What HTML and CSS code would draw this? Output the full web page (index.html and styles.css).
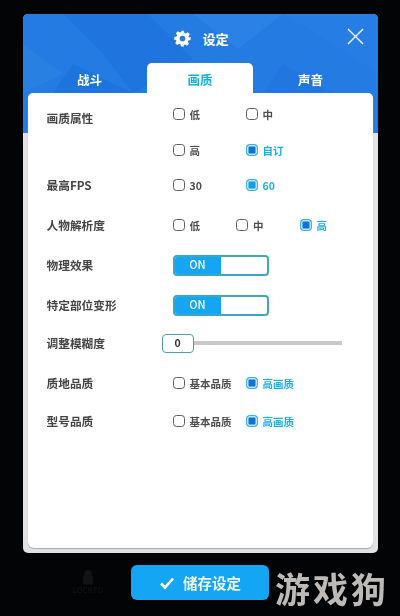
FILE: index.html
```html
<!DOCTYPE html>
<html lang="zh">
<head>
<meta charset="utf-8">
<title>设定</title>
<link rel="stylesheet" href="styles.css">
</head>
<body>
<main class="page">
  <section class="modal">
    <header class="head">
      <svg class="pattern" viewBox="0 0 355 119" preserveAspectRatio="none" aria-hidden="true">
        <polygon points="40,0 125,0 170,45 110,79 80,40" fill="#1668d6" opacity=".35"/>
        <polygon points="50,50 110,79 30,79" fill="#1568d4" opacity=".35"/>
        <polygon points="170,0 260,0 215,35" fill="#3a8fea" opacity=".3"/>
        <polygon points="260,0 355,0 355,60 310,30" fill="#2b80e4" opacity=".3"/>
        <polygon points="0,30 40,60 0,79" fill="#3189e6" opacity=".35"/>
        <polygon points="260,50 310,79 240,79" fill="#1c6fdb" opacity=".35"/>
      </svg>
      <div class="title">
        <svg class="gear" viewBox="0 0 24 24" aria-hidden="true"><path fill-rule="evenodd" d="M10 1h4l.7 3.2 1.9.8 2.8-1.8 2.8 2.8-1.8 2.8.8 1.9L23.4 10v4l-3.2.7-.8 1.9 1.8 2.8-2.8 2.8-2.8-1.8-1.9.8L13.9 23.4h-4l-.7-3.2-1.9-.8-2.8 1.8-2.8-2.8 1.8-2.8-.8-1.9L.5 14v-4l3.2-.7.8-1.9L2.7 4.6 5.5 1.8l2.8 1.8 1.9-.8L10 1Zm2 7a4 4 0 1 0 0 8 4 4 0 0 0 0-8Z"/></svg>
        <h1>设定</h1>
      </div>
      <svg class="close" viewBox="0 0 18 18" aria-hidden="true"><path d="M1 1l16 16M17 1L1 17"/></svg>
      <nav class="tabs">
        <span class="tab">战斗</span>
        <span class="tab tab-active">画质</span>
        <span class="tab">声音</span>
      </nav>
    </header>
    <div class="panel">
      <div class="row row-first">
        <span class="label">画质属性</span>
        <div class="opts">
          <span class="opt"><i class="box"></i>低</span>
          <span class="opt"><i class="box"></i>中</span>
        </div>
      </div>
      <div class="row row-second">
        <span class="label"></span>
        <div class="opts">
          <span class="opt"><i class="box"></i>高</span>
          <span class="opt on"><i class="box"></i>自订</span>
        </div>
      </div>
      <div class="row row-std">
        <span class="label">最高FPS</span>
        <div class="opts">
          <span class="opt"><i class="box"></i>30</span>
          <span class="opt on on-light"><i class="box"></i>60</span>
        </div>
      </div>
      <div class="row row-std">
        <span class="label">人物解析度</span>
        <div class="opts opts-tight">
          <span class="opt"><i class="box"></i>低</span>
          <span class="opt"><i class="box"></i>中</span>
          <span class="opt on"><i class="box"></i>高</span>
        </div>
      </div>
      <div class="row row-std">
        <span class="label">物理效果</span>
        <div class="toggle"><span class="toggle-on">ON</span><span class="toggle-off"></span></div>
      </div>
      <div class="row row-std">
        <span class="label">特定部位变形</span>
        <div class="toggle"><span class="toggle-on">ON</span><span class="toggle-off"></span></div>
      </div>
      <div class="row row-slider">
        <span class="label">调整模糊度</span>
        <div class="slider"><span class="thumb">0</span><span class="track"></span></div>
      </div>
      <div class="row row-q">
        <span class="label">质地品质</span>
        <div class="opts">
          <span class="opt"><i class="box"></i>基本品质</span>
          <span class="opt on"><i class="box"></i>高画质</span>
        </div>
      </div>
      <div class="row row-q2">
        <span class="label">型号品质</span>
        <div class="opts">
          <span class="opt"><i class="box"></i>基本品质</span>
          <span class="opt on"><i class="box"></i>高画质</span>
        </div>
      </div>
    </div>
  </section>
  <div class="foot">
    <div class="ghost">
      <svg class="ghost-lock" viewBox="0 0 14 18" aria-hidden="true"><path d="M3.5 8V5a3.5 3.5 0 0 1 7 0v3M2 8h10v9H2z"/></svg>
      <span>LOCKED</span>
    </div>
    <button class="save" type="button">
      <svg class="check" viewBox="0 0 16 14" aria-hidden="true"><path d="M2 7.5l4 4 8-9"/></svg>
      储存设定
    </button>
    <span class="mark">游戏狗</span>
  </div>
</main>
</body>
</html>
```
FILE: styles.css
```css
* { box-sizing: border-box; }
html, body { margin: 0; height: 100%; }
body {
  background: #030405;
  font-family: "Noto Sans CJK SC", "Noto Sans", sans-serif;
  overflow: hidden;
}
.page {
  width: 400px;
  height: 616px;
  padding-top: 14px;
  display: flex;
  flex-direction: column;
  align-items: center;
  filter: blur(0.35px);
}
.modal {
  width: 355px;
  height: 539px;
  background: #e2e2e2;
  border-radius: 5px;
  overflow: hidden;
  display: flex;
  flex-direction: column;
  flex: none;
}
.head {
  position: relative;
  height: 119px;
  background: #247ce2;
  flex: none;
}
.pattern { position: absolute; inset: 0; width: 100%; height: 100%; }
.title {
  position: relative;
  height: 49px;
  display: flex;
  align-items: center;
  justify-content: center;
  gap: 11px;
  padding-left: 3px;
}
.gear { width: 17px; height: 17px; fill: #fff; }
.title h1 { margin: 0; font-size: 13px; font-weight: 700; color: #fff; }
.close {
  position: absolute;
  top: 14px;
  right: 14px;
  width: 17px;
  height: 17px;
  fill: none;
  stroke: #fff;
  stroke-width: 1.4;
}
.tabs {
  position: relative;
  display: grid;
  grid-template-columns: repeat(3, 110.5px);
  justify-content: center;
  height: 30px;
}
.tab {
  display: flex;
  align-items: center;
  justify-content: center;
  padding-top: 2px;
  font-size: 12.5px;
  font-weight: 700;
  color: #fff;
}
.tab-active {
  width: 106px;
  justify-self: center;
  background: #fff;
  color: #19b0dc;
  border-radius: 5px 5px 0 0;
}
.panel {
  position: relative;
  flex: 1;
  margin: -40px 5px 5px;
  padding: 0 19px;
  background: #fff;
  border-radius: 5px 5px 6px 6px;
  box-shadow: 0 1px 1px #a8a8a8;
}
.row { display: flex; align-items: center; }
.row-first { height: 42px; padding-top: 8px; }
.row-first .opts { margin-top: -8px; }
.row-second { height: 30px; }
.row-std { height: 40px; }
.row-slider { height: 36px; }
.row-q { height: 44px; }
.row-q2 { height: 32px; }
.label {
  width: 126px;
  flex: none;
  margin-top: -2px;
  font-size: 11.7px;
  font-weight: 700;
  color: #454545;
}
.opts { display: flex; }
.opt {
  width: 73px;
  flex: none;
  display: flex;
  align-items: center;
  gap: 5px;
  font-size: 10.5px;
  font-weight: 700;
  color: #4d4d4d;
  white-space: nowrap;
}
.opts-tight .opt { width: 63.5px; }
.box {
  width: 12px;
  height: 12px;
  border: 1.7px solid #5c5c5c;
  border-radius: 3.5px;
  background: #fff;
  flex: none;
}
.on { color: #1daee0; }
.on .box {
  border-color: #3cb2dc;
  background: #0e72d8;
  box-shadow: inset 0 0 0 1.5px #bfe6f5;
}
.on-light .box { background: #12a0e8; }
.toggle {
  width: 96px;
  height: 21px;
  display: flex;
  border: 2px solid #3fa6c0;
  border-radius: 4px;
  overflow: hidden;
  background: #fff;
}
.toggle-on {
  width: 46px;
  background: #14a6f3;
  color: #fff;
  font-size: 11px;
  font-weight: 500;
  line-height: 14px;
  text-align: center;
}
.toggle-off { flex: 1; }
.slider { display: flex; align-items: center; margin-left: -11px; width: 180px; }
.thumb {
  width: 32px;
  height: 19px;
  flex: none;
  border: 1.5px solid #4c9fb2;
  border-radius: 4px;
  background: #fff;
  color: #333;
  font-size: 10.5px;
  font-weight: 700;
  line-height: 16px;
  text-align: center;
}
.track { flex: 1; height: 4px; background: #c9c9c9; }
.foot {
  position: relative;
  width: 100%;
  margin-top: 12px;
  display: flex;
  justify-content: center;
}
.ghost {
  position: absolute;
  left: 70px;
  top: 4px;
  width: 36px;
  display: flex;
  flex-direction: column;
  align-items: center;
  color: #131515;
  font-size: 8px;
  line-height: 10px;
}
.ghost-lock { width: 12px; height: 16px; fill: #131515; stroke: #131515; stroke-width: 1.5; }
.save {
  width: 138px;
  height: 35px;
  border: 0;
  border-radius: 6px;
  background: #14a6f3;
  color: #eef8fe;
  font: 700 14.5px "Noto Sans CJK SC", sans-serif;
  display: flex;
  align-items: center;
  justify-content: center;
  gap: 8px;
  padding: 0;
}
.check { width: 16px; height: 14px; fill: none; stroke: #fff; stroke-width: 2.6; }
.mark {
  position: absolute;
  left: 275px;
  top: 2px;
  font-size: 35px;
  line-height: 42px;
  font-weight: 700;
  letter-spacing: 3px;
  color: #bdb9b6;
  white-space: nowrap;
}
```
